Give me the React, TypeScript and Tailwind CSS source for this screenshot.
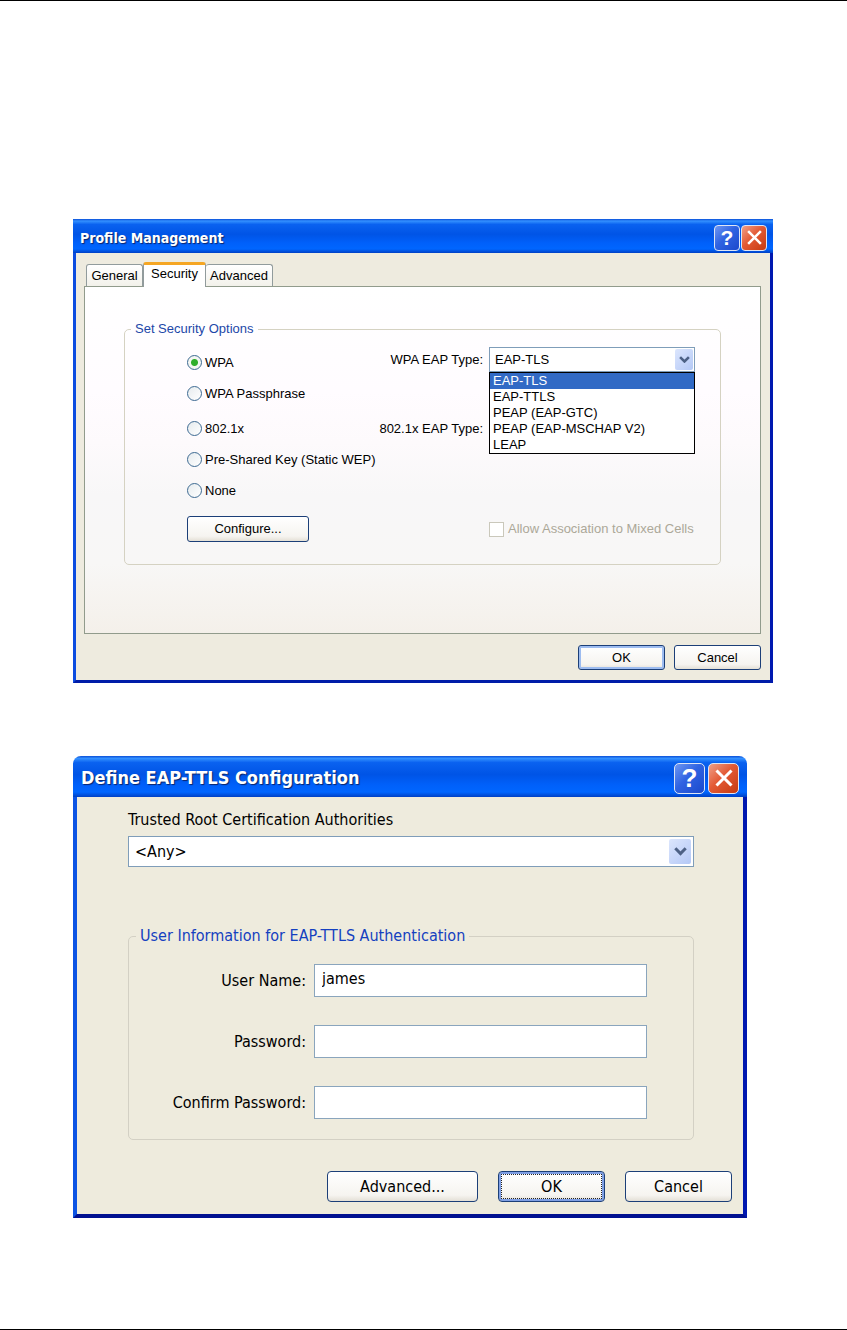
import type { ReactNode } from 'react';
import clsx from 'clsx';

const radios = [
  { id: 'wpa', label: 'WPA', className: '' },
  { id: 'wpa-passphrase', label: 'WPA Passphrase', className: '' },
  { id: '8021x', label: '802.1x', className: 'mt-1' },
  { id: 'static-wep', label: 'Pre-Shared Key (Static WEP)', className: '' },
  { id: 'none', label: 'None', className: '' },
];

const eapTypes = ['EAP-TLS', 'EAP-TTLS', 'PEAP (EAP-GTC)', 'PEAP (EAP-MSCHAP V2)', 'LEAP'];

const fields = [
  { id: 'user', label: 'User Name:', type: 'text', value: 'james' },
  { id: 'password', label: 'Password:', type: 'password', value: '' },
  { id: 'confirm', label: 'Confirm Password:', type: 'password', value: '' },
];

function TitleBar({ title, large = false }: { title: string; large?: boolean }) {
  const button = clsx(
    'flex items-center justify-center border border-[#dfe6f5] text-white',
    large ? 'size-[31px] rounded-[5px] text-[26px]' : 'size-[26px] rounded-[4px] text-[21px]'
  );
  return (
    <header
      className={clsx(
        'flex items-center justify-between bg-[linear-gradient(to_bottom,#0a4fd8_0%,#3390ff_6%,#0a62f0_16%,#0054e6_45%,#0060fa_70%,#0066ff_88%,#0040c4_100%)]',
        large ? 'h-[41px] rounded-t-[8px] pl-2 pr-2 pt-[3px]' : 'h-[34px] pl-[7px] pr-[6px] pt-[3px]'
      )}
    >
      <h2
        className={clsx(
          "font-['DejaVu_Sans_Condensed','DejaVu_Sans',sans-serif] font-bold text-white [text-shadow:1px_1px_1px_#0a246a]",
          large ? 'text-[18px]' : 'text-[14px]'
        )}
      >
        {title}
      </h2>
      <div className={clsx('flex', large ? 'gap-[3px]' : 'gap-px')}>
        <button
          type="button"
          className={clsx(
            button,
            "bg-[linear-gradient(135deg,#6f97f2_0%,#2f63e2_45%,#1c49cc_100%)] font-['Liberation_Sans',Arial,sans-serif] font-bold leading-none"
          )}
        >
          ?
        </button>
        <button
          type="button"
          aria-label="Close"
          className={clsx(button, 'bg-[linear-gradient(135deg,#f0a088_0%,#e35a35_45%,#c63a10_100%)]')}
        >
          <svg viewBox="0 0 16 16" className={large ? 'size-[20px]' : 'size-[17px]'} fill="none" stroke="white" strokeWidth="2.4">
            <path d="M2 2 L14 14 M14 2 L2 14" />
          </svg>
        </button>
      </div>
    </header>
  );
}

function Select({ id, large = false, children }: { id: string; large?: boolean; children?: ReactNode }) {
  return (
    <div className="relative w-full">
      <select
        id={id}
        className={clsx(
          'block w-full appearance-none border border-[#7f9db9] bg-white text-black outline-none',
          large ? 'h-[31px] px-[6px]' : 'h-[25px] px-[5px]'
        )}
      >
        {children}
      </select>
      <span
        className={clsx(
          'pointer-events-none absolute flex items-center justify-center rounded-[2px] bg-[linear-gradient(135deg,#dce6fd,#b4c8f6)]',
          large ? 'right-[3px] top-[3px] h-[25px] w-[22px]' : 'right-[2px] top-[2px] h-[21px] w-[18px]'
        )}
      >
        <svg viewBox="0 0 12 8" className={large ? 'w-[13px]' : 'w-[11px]'} fill="none" stroke="#4d6185" strokeWidth="2.8">
          <path d="M1.2 1.2 L6 6 L10.8 1.2" />
        </svg>
      </span>
    </div>
  );
}

function Button({ children, className }: { children: ReactNode; className: string }) {
  return (
    <button
      type="button"
      className={clsx(
        'border border-[#1c3f78] bg-[linear-gradient(to_bottom,#ffffff,#f6f4f0_80%,#e4e0d6)] text-black',
        className
      )}
    >
      {children}
    </button>
  );
}

function ProfileManagement() {
  return (
    <section className="w-full max-w-[700px] font-['Liberation_Sans',Arial,sans-serif] text-[13px] leading-4 text-black">
      <TitleBar title="Profile Management" />
      <div className="border-x-[3px] border-b-[3px] border-b-[#001ca8] border-l-[#0c4ce0] border-r-[#0018b0] bg-[#eeebdf] pb-2.5 pl-2 pr-[9px] pt-[9px]">
        <div role="tablist" className="flex h-6 items-end pl-0.5">
          <button
            type="button"
            role="tab"
            className="h-[22px] w-[57px] rounded-t-[3px] border border-b-0 border-[#919b9c] bg-[linear-gradient(to_bottom,#fff,#f2f1ea)]"
          >
            General
          </button>
          <button
            type="button"
            role="tab"
            aria-selected
            className="-mb-px h-[25px] w-[63px] rounded-t-[3px] border border-b-0 border-t-[3px] border-[#919b9c] border-t-[#f5a623] bg-white pb-1"
          >
            Security
          </button>
          <button
            type="button"
            role="tab"
            className="h-[22px] w-[67px] rounded-t-[3px] border border-b-0 border-l-0 border-[#919b9c] bg-[linear-gradient(to_bottom,#fff,#f2f1ea)]"
          >
            Advanced
          </button>
        </div>

        <div className="border border-[#919b8c] bg-[linear-gradient(to_bottom,#ffffff_0%,#fffcff_30%,#fdfafc_45%,#f8f7f8_60%,#f8f7f6_80%,#f4f0ea_100%)] px-[39px] pb-[68px] pt-[34px]">
          <fieldset className="rounded-[5px] border border-[#d5d2c2] pb-[22px]">
            <legend className="ml-[6px] px-1 text-[#1c47a8]">Set Security Options</legend>
            <div className="flex justify-between pl-[62px] pr-[25px] pt-[10px]">
              <div className="flex flex-col">
                {radios.map((radio) => (
                  <label key={radio.id} className={clsx('flex h-[31px] items-center gap-[3px]', radio.className)}>
                    <input
                      type="radio"
                      name="security"
                      defaultChecked={radio.id === 'wpa'}
                      className="size-[15px] appearance-none rounded-full border border-[#3d6a92] bg-[linear-gradient(135deg,#e6ebee,#ffffff)] checked:bg-[radial-gradient(circle,#2fae2a_0_3px,#f4f6f2_4px)]"
                    />
                    {radio.label}
                  </label>
                ))}
                <Button className="mt-[10px] h-[26px] w-[122px] rounded-[3px]">Configure...</Button>
              </div>

              <div className="flex flex-col items-end">
                <div className="flex items-center gap-[6px]">
                  <label htmlFor="wpa-eap">WPA EAP Type:</label>
                  <div className="relative w-[206px]">
                    <Select id="wpa-eap">
                      <option>EAP-TLS</option>
                    </Select>
                    <ul role="listbox" className="absolute left-0 top-full z-10 w-full border border-black bg-white">
                      {eapTypes.map((type, i) => (
                        <li
                          key={type}
                          role="option"
                          aria-selected={i === 0}
                          className={clsx('px-[3px]', i === 0 && 'bg-[#316ac5] text-white')}
                        >
                          {type}
                        </li>
                      ))}
                    </ul>
                  </div>
                </div>
                <div className="mt-11 flex items-center gap-[6px]">
                  <label htmlFor="dot1x-eap">802.1x EAP Type:</label>
                  <div className="w-[206px]">
                    <Select id="dot1x-eap" />
                  </div>
                </div>
                <label className="mt-auto flex h-[26px] w-[206px] items-center gap-1 text-[#aca899]">
                  <input type="checkbox" disabled className="size-[15px] appearance-none border border-[#cac8bb] bg-white" />
                  Allow Association to Mixed Cells
                </label>
              </div>
            </div>
          </fieldset>
        </div>

        <div className="mt-[11px] flex justify-end gap-[9px]">
          <Button className="h-[25px] w-[87px] rounded-[3px] shadow-[inset_0_0_0_2px_#9dbcf0]">OK</Button>
          <Button className="h-[25px] w-[87px] rounded-[3px]">Cancel</Button>
        </div>
      </div>
    </section>
  );
}

function EapTtlsConfiguration() {
  return (
    <section className="w-full max-w-[674px] font-['DejaVu_Sans_Condensed','DejaVu_Sans',sans-serif] text-[16px] leading-5 text-black">
      <TitleBar title="Define EAP-TTLS Configuration" large />
      <div className="border-x-4 border-b-4 border-b-[#001090] border-l-[#0c54e4] border-r-[#0018b0] bg-[#eeebdd] pb-[12px] pt-[13px]">
        <div className="pl-[51px] pr-[49px]">
          <label htmlFor="authority" className="mb-[6px] block">
            Trusted Root Certification Authorities
          </label>
          <Select id="authority" large>
            <option>&lt;Any&gt;</option>
          </Select>

          <fieldset className="mt-[59px] rounded-[5px] border border-[#d3d0c4] pb-[20px] pt-[18px]">
            <legend className="ml-[7px] px-1 text-[#1440c0]">User Information for EAP-TTLS Authentication</legend>
            <div className="flex flex-col gap-7 pr-[46px]">
              {fields.map((field) => (
                <div key={field.id} className="flex items-center gap-2">
                  <label htmlFor={field.id} className="w-[177px] text-right">
                    {field.label}
                  </label>
                  <input
                    id={field.id}
                    type={field.type}
                    defaultValue={field.value}
                    className="h-[33px] min-w-0 flex-1 border border-[#8aa5bd] bg-white px-[7px] pb-1 outline-none"
                  />
                </div>
              ))}
            </div>
          </fieldset>
        </div>

        <div className="mt-[31px] flex justify-end gap-[20px] pr-[11px]">
          <Button className="h-[31px] w-[151px] rounded-[4px]">Advanced...</Button>
          <Button className="h-[31px] w-[107px] rounded-[4px] p-[2px] shadow-[inset_0_0_0_2px_#7f9fe4]">
            <span className="flex h-full items-center justify-center border border-dotted border-[#222]">OK</span>
          </Button>
          <Button className="h-[31px] w-[107px] rounded-[4px]">Cancel</Button>
        </div>
      </div>
    </section>
  );
}

export default function App() {
  return (
    <main className="flex min-h-screen flex-col gap-[73px] border-y border-black bg-white px-[73px] pb-[110px] pt-[218px]">
      <ProfileManagement />
      <EapTtlsConfiguration />
    </main>
  );
}
